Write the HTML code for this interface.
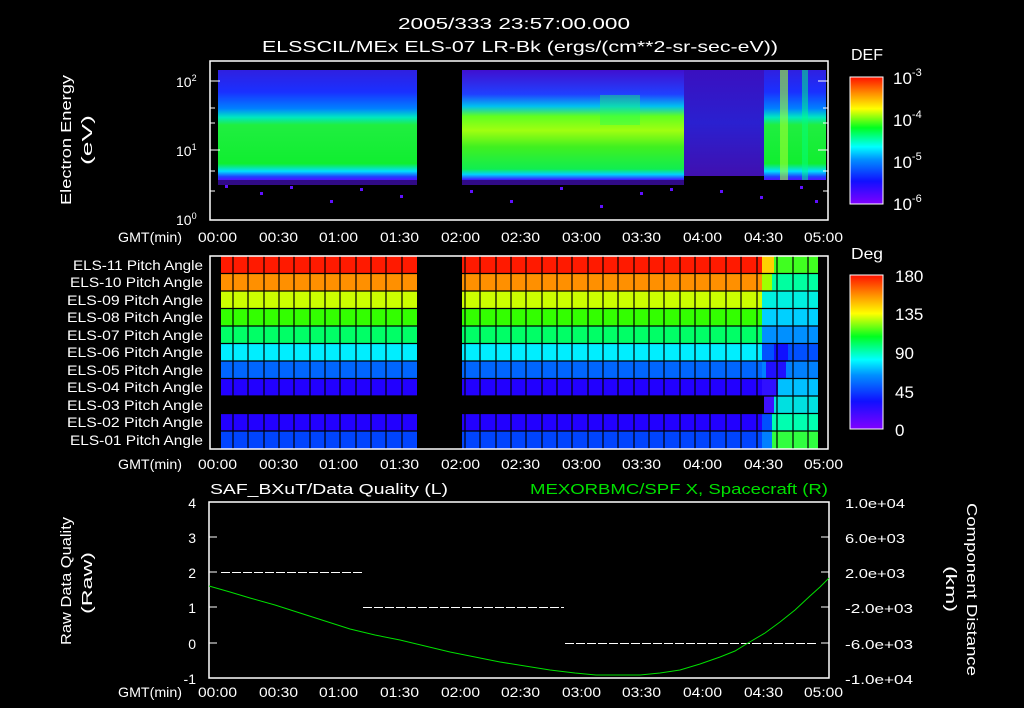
<!DOCTYPE html>
<html><head><meta charset="utf-8"><style>
html,body{margin:0;padding:0;background:#000;width:1024px;height:708px;overflow:hidden}
svg{display:block}
text{font-family:"Liberation Sans",sans-serif;fill:#fff}
</style></head><body>
<svg width="1024" height="708" viewBox="0 0 1024 708" xmlns="http://www.w3.org/2000/svg">
<defs>
<linearGradient id="cb" x1="0" y1="1" x2="0" y2="0">
<stop offset="0" stop-color="#8000ff"/><stop offset="0.18" stop-color="#1010ff"/>
<stop offset="0.35" stop-color="#0090ff"/><stop offset="0.45" stop-color="#00ffff"/>
<stop offset="0.6" stop-color="#00ff20"/><stop offset="0.75" stop-color="#ffff00"/>
<stop offset="0.87" stop-color="#ff9000"/><stop offset="1" stop-color="#ff1000"/>
</linearGradient>
<linearGradient id="specL" x1="0" y1="0" x2="0" y2="1">
<stop offset="0" stop-color="#3020e0"/><stop offset="0.2" stop-color="#1a30ff"/>
<stop offset="0.35" stop-color="#0080ff"/><stop offset="0.43" stop-color="#00e8c0"/>
<stop offset="0.5" stop-color="#20ee40"/><stop offset="0.85" stop-color="#10ee30"/>
<stop offset="0.92" stop-color="#00e0ff"/><stop offset="0.97" stop-color="#2040ff"/>
<stop offset="1" stop-color="#5010ff"/>
</linearGradient>
<linearGradient id="specR" x1="0" y1="0" x2="0" y2="1">
<stop offset="0" stop-color="#4010d0"/><stop offset="0.22" stop-color="#2040ff"/>
<stop offset="0.33" stop-color="#00c0f0"/><stop offset="0.42" stop-color="#60ff20"/>
<stop offset="0.55" stop-color="#a0ff10"/><stop offset="0.7" stop-color="#40f020"/>
<stop offset="0.9" stop-color="#10ee50"/><stop offset="0.95" stop-color="#00d0ff"/>
<stop offset="1" stop-color="#4010ff"/>
</linearGradient>
<linearGradient id="specD" x1="0" y1="0" x2="0" y2="1">
<stop offset="0" stop-color="#3a10c0"/><stop offset="0.5" stop-color="#2a20d0"/>
<stop offset="1" stop-color="#4010b0"/>
</linearGradient>
</defs>

<text x="398" y="29" font-size="16" textLength="232" lengthAdjust="spacingAndGlyphs">2005/333 23:57:00.000</text>
<text x="262" y="52" font-size="16" textLength="516" lengthAdjust="spacingAndGlyphs">ELSSCIL/MEx ELS-07 LR-Bk  (ergs/(cm**2-sr-sec-eV))</text>

<!-- top spectrogram -->
<rect x="218" y="70" width="199" height="110" fill="url(#specL)"/>
<rect x="462" y="70" width="222" height="110" fill="url(#specR)"/>
<rect x="684" y="70" width="80" height="106" fill="url(#specD)"/>
<rect x="764" y="70" width="62" height="110" fill="url(#specL)"/>
<rect x="780" y="70" width="8" height="110" fill="#a0ff30" opacity="0.6"/>
<rect x="802" y="70" width="6" height="110" fill="#00ff80" opacity="0.5"/>
<rect x="600" y="95" width="40" height="30" fill="#20ff60" opacity="0.4"/>
<g fill="#6010ff">
<rect x="225" y="185" width="3" height="3"/><rect x="260" y="192" width="3" height="3"/><rect x="290" y="186" width="3" height="3"/><rect x="330" y="200" width="3" height="3"/><rect x="360" y="188" width="3" height="3"/><rect x="400" y="195" width="3" height="3"/><rect x="470" y="190" width="3" height="3"/><rect x="510" y="200" width="3" height="3"/><rect x="560" y="187" width="3" height="3"/><rect x="600" y="205" width="3" height="3"/><rect x="640" y="192" width="3" height="3"/><rect x="670" y="188" width="3" height="3"/><rect x="720" y="190" width="3" height="3"/><rect x="760" y="196" width="3" height="3"/><rect x="800" y="186" width="3" height="3"/><rect x="815" y="200" width="3" height="3"/>
</g>
<rect x="218" y="180" width="199" height="5" fill="#5010e0" opacity="0.6"/>
<rect x="462" y="180" width="222" height="5" fill="#5010e0" opacity="0.6"/>
<rect x="210" y="61" width="618" height="159" fill="none" stroke="#fff" stroke-width="1.5"/>
<g stroke="#fff">
<line x1="210" y1="81" x2="220" y2="81"/><line x1="210" y1="150" x2="220" y2="150"/>
<line x1="210" y1="108" x2="215" y2="108"/><line x1="210" y1="123" x2="215" y2="123"/><line x1="210" y1="171" x2="215" y2="171"/><line x1="210" y1="191" x2="215" y2="191"/>
<line x1="818" y1="81" x2="828" y2="81"/><line x1="818" y1="150" x2="828" y2="150"/>
<line x1="823" y1="108" x2="828" y2="108"/><line x1="823" y1="123" x2="828" y2="123"/><line x1="823" y1="171" x2="828" y2="171"/><line x1="823" y1="191" x2="828" y2="191"/>
</g>
<text x="176" y="87" font-size="14">10<tspan dy="-6" font-size="9">2</tspan></text>
<text x="176" y="156" font-size="14">10<tspan dy="-6" font-size="9">1</tspan></text>
<text x="176" y="225" font-size="14">10<tspan dy="-6" font-size="9">0</tspan></text>
<text transform="translate(71,205) rotate(-90)" font-size="15" textLength="130" lengthAdjust="spacingAndGlyphs">Electron Energy</text>
<text transform="translate(92,165) rotate(-90)" font-size="15" textLength="50" lengthAdjust="spacingAndGlyphs">(eV)</text>

<g font-size="14">
<text x="118" y="242" textLength="64" lengthAdjust="spacingAndGlyphs">GMT(min)</text>
<text x="198" y="242" textLength="39" lengthAdjust="spacingAndGlyphs">00:00</text><text x="259" y="242" textLength="39" lengthAdjust="spacingAndGlyphs">00:30</text><text x="319" y="242" textLength="39" lengthAdjust="spacingAndGlyphs">01:00</text><text x="380" y="242" textLength="39" lengthAdjust="spacingAndGlyphs">01:30</text><text x="441" y="242" textLength="39" lengthAdjust="spacingAndGlyphs">02:00</text><text x="501" y="242" textLength="39" lengthAdjust="spacingAndGlyphs">02:30</text><text x="562" y="242" textLength="39" lengthAdjust="spacingAndGlyphs">03:00</text><text x="622" y="242" textLength="39" lengthAdjust="spacingAndGlyphs">03:30</text><text x="683" y="242" textLength="39" lengthAdjust="spacingAndGlyphs">04:00</text><text x="744" y="242" textLength="39" lengthAdjust="spacingAndGlyphs">04:30</text><text x="804" y="242" textLength="39" lengthAdjust="spacingAndGlyphs">05:00</text>
</g>

<!-- DEF colorbar -->
<text x="851" y="60" font-size="16" textLength="32" lengthAdjust="spacingAndGlyphs">DEF</text>
<rect x="850" y="77" width="33" height="127" fill="url(#cb)" stroke="#fff"/>
<text x="893" y="84" font-size="17">10<tspan dy="-8" font-size="11">-3</tspan></text>
<text x="893" y="126" font-size="17">10<tspan dy="-8" font-size="11">-4</tspan></text>
<text x="893" y="168" font-size="17">10<tspan dy="-8" font-size="11">-5</tspan></text>
<text x="893" y="210" font-size="17">10<tspan dy="-8" font-size="11">-6</tspan></text>

<!-- pitch panel -->
<g>
<rect x="221" y="256" width="196" height="17.5" fill="#ff1a00"/><rect x="462" y="256" width="300" height="17.5" fill="#ff1a00"/>
<rect x="221" y="273.5" width="196" height="17.5" fill="#ff9000"/><rect x="462" y="273.5" width="300" height="17.5" fill="#ff9000"/>
<rect x="221" y="291" width="196" height="17.5" fill="#ccff00"/><rect x="462" y="291" width="300" height="17.5" fill="#ccff00"/>
<rect x="221" y="308.5" width="196" height="17.5" fill="#33ff00"/><rect x="462" y="308.5" width="300" height="17.5" fill="#33ff00"/>
<rect x="221" y="326" width="196" height="17.5" fill="#00ff66"/><rect x="462" y="326" width="300" height="17.5" fill="#00ff66"/>
<rect x="221" y="343.5" width="196" height="17.5" fill="#00eeff"/><rect x="462" y="343.5" width="300" height="17.5" fill="#00eeff"/>
<rect x="221" y="361" width="196" height="17.5" fill="#0066ff"/><rect x="462" y="361" width="300" height="17.5" fill="#0066ff"/>
<rect x="221" y="378.5" width="196" height="17.5" fill="#2200ff"/><rect x="462" y="378.5" width="300" height="17.5" fill="#2200ff"/>
<rect x="221" y="413.5" width="196" height="17.5" fill="#2200ff"/><rect x="462" y="413.5" width="300" height="17.5" fill="#2200ff"/>
<rect x="221" y="431" width="196" height="17.5" fill="#0044ff"/><rect x="462" y="431" width="300" height="17.5" fill="#0044ff"/>
<rect x="762" y="256" width="56" height="17.5" fill="#40ff20"/><rect x="762" y="256" width="12" height="17.5" fill="#ffd000"/>
<rect x="762" y="273.5" width="56" height="17.5" fill="#00ffa0"/><rect x="762" y="273.5" width="10" height="17.5" fill="#a0ff00"/>
<rect x="762" y="291" width="56" height="17.5" fill="#00f0e0"/>
<rect x="762" y="308.5" width="56" height="17.5" fill="#00d0ff"/>
<rect x="762" y="326" width="56" height="17.5" fill="#0090ff"/>
<rect x="762" y="343.5" width="56" height="17.5" fill="#0050ff"/><rect x="774" y="343.5" width="14" height="17.5" fill="#1010ff"/>
<rect x="762" y="361" width="56" height="17.5" fill="#0080ff"/><rect x="766" y="361" width="20" height="17.5" fill="#2010ff"/>
<rect x="762" y="378.5" width="56" height="17.5" fill="#00c0ff"/><rect x="762" y="378.5" width="16" height="17.5" fill="#3010ff"/>
<rect x="764" y="396" width="54" height="17.5" fill="#00e0e0"/><rect x="764" y="396" width="10" height="17.5" fill="#4010ff"/>
<rect x="762" y="413.5" width="56" height="17.5" fill="#00ffb0"/><rect x="762" y="413.5" width="10" height="17.5" fill="#0050ff"/>
<rect x="762" y="431" width="56" height="17.5" fill="#30ff40"/><rect x="762" y="431" width="10" height="17.5" fill="#0080ff"/>
<g stroke="#000" stroke-width="1.2">
<line x1="221" y1="273.5" x2="818" y2="273.5"/><line x1="221" y1="291" x2="818" y2="291"/><line x1="221" y1="308.5" x2="818" y2="308.5"/><line x1="221" y1="326" x2="818" y2="326"/><line x1="221" y1="343.5" x2="818" y2="343.5"/><line x1="221" y1="361" x2="818" y2="361"/><line x1="221" y1="378.5" x2="818" y2="378.5"/><line x1="221" y1="396" x2="818" y2="396"/><line x1="221" y1="413.5" x2="818" y2="413.5"/><line x1="221" y1="431" x2="818" y2="431"/>
</g>
<g stroke="#000" stroke-width="1.2">
<line x1="233" y1="256" x2="233" y2="449"/><line x1="248" y1="256" x2="248" y2="449"/><line x1="264" y1="256" x2="264" y2="449"/><line x1="279" y1="256" x2="279" y2="449"/><line x1="294" y1="256" x2="294" y2="449"/><line x1="310" y1="256" x2="310" y2="449"/><line x1="325" y1="256" x2="325" y2="449"/><line x1="340" y1="256" x2="340" y2="449"/><line x1="356" y1="256" x2="356" y2="449"/><line x1="371" y1="256" x2="371" y2="449"/><line x1="386" y1="256" x2="386" y2="449"/><line x1="402" y1="256" x2="402" y2="449"/>
<line x1="465" y1="256" x2="465" y2="449"/><line x1="480" y1="256" x2="480" y2="449"/><line x1="496" y1="256" x2="496" y2="449"/><line x1="511" y1="256" x2="511" y2="449"/><line x1="526" y1="256" x2="526" y2="449"/><line x1="542" y1="256" x2="542" y2="449"/><line x1="557" y1="256" x2="557" y2="449"/><line x1="572" y1="256" x2="572" y2="449"/><line x1="588" y1="256" x2="588" y2="449"/><line x1="603" y1="256" x2="603" y2="449"/><line x1="618" y1="256" x2="618" y2="449"/><line x1="634" y1="256" x2="634" y2="449"/><line x1="649" y1="256" x2="649" y2="449"/><line x1="664" y1="256" x2="664" y2="449"/><line x1="680" y1="256" x2="680" y2="449"/><line x1="695" y1="256" x2="695" y2="449"/><line x1="710" y1="256" x2="710" y2="449"/><line x1="726" y1="256" x2="726" y2="449"/><line x1="741" y1="256" x2="741" y2="449"/><line x1="757" y1="256" x2="757" y2="449"/><line x1="777" y1="256" x2="777" y2="449"/><line x1="793" y1="256" x2="793" y2="449"/><line x1="808" y1="256" x2="808" y2="449"/>
</g>
<rect x="210" y="256" width="618" height="193" fill="none" stroke="#fff" stroke-width="1.5"/>
</g>
<g font-size="14">
<text x="73" y="270" textLength="130" lengthAdjust="spacingAndGlyphs">ELS-11 Pitch Angle</text><text x="70" y="287" textLength="133" lengthAdjust="spacingAndGlyphs">ELS-10 Pitch Angle</text><text x="67" y="305" textLength="136" lengthAdjust="spacingAndGlyphs">ELS-09 Pitch Angle</text><text x="67" y="322" textLength="136" lengthAdjust="spacingAndGlyphs">ELS-08 Pitch Angle</text><text x="67" y="340" textLength="136" lengthAdjust="spacingAndGlyphs">ELS-07 Pitch Angle</text><text x="67" y="357" textLength="136" lengthAdjust="spacingAndGlyphs">ELS-06 Pitch Angle</text><text x="67" y="375" textLength="136" lengthAdjust="spacingAndGlyphs">ELS-05 Pitch Angle</text><text x="67" y="392" textLength="136" lengthAdjust="spacingAndGlyphs">ELS-04 Pitch Angle</text><text x="67" y="410" textLength="136" lengthAdjust="spacingAndGlyphs">ELS-03 Pitch Angle</text><text x="67" y="427" textLength="136" lengthAdjust="spacingAndGlyphs">ELS-02 Pitch Angle</text><text x="70" y="445" textLength="133" lengthAdjust="spacingAndGlyphs">ELS-01 Pitch Angle</text>
</g>
<g font-size="14">
<text x="118" y="469" textLength="64" lengthAdjust="spacingAndGlyphs">GMT(min)</text>
<text x="198" y="469" textLength="39" lengthAdjust="spacingAndGlyphs">00:00</text><text x="259" y="469" textLength="39" lengthAdjust="spacingAndGlyphs">00:30</text><text x="319" y="469" textLength="39" lengthAdjust="spacingAndGlyphs">01:00</text><text x="380" y="469" textLength="39" lengthAdjust="spacingAndGlyphs">01:30</text><text x="441" y="469" textLength="39" lengthAdjust="spacingAndGlyphs">02:00</text><text x="501" y="469" textLength="39" lengthAdjust="spacingAndGlyphs">02:30</text><text x="562" y="469" textLength="39" lengthAdjust="spacingAndGlyphs">03:00</text><text x="622" y="469" textLength="39" lengthAdjust="spacingAndGlyphs">03:30</text><text x="683" y="469" textLength="39" lengthAdjust="spacingAndGlyphs">04:00</text><text x="744" y="469" textLength="39" lengthAdjust="spacingAndGlyphs">04:30</text><text x="804" y="469" textLength="39" lengthAdjust="spacingAndGlyphs">05:00</text>
</g>

<!-- Deg colorbar -->
<text x="851" y="259" font-size="16" textLength="32" lengthAdjust="spacingAndGlyphs">Deg</text>
<rect x="850" y="275" width="33" height="154" fill="url(#cb)" stroke="#fff"/>
<g font-size="17"><text x="895" y="282">180</text><text x="895" y="320">135</text><text x="895" y="359">90</text><text x="895" y="398">45</text><text x="895" y="436">0</text></g>

<!-- bottom panel -->
<text x="210" y="494" font-size="15" textLength="238" lengthAdjust="spacingAndGlyphs">SAF_BXuT/Data Quality (L)</text>
<text x="530" y="494" font-size="15" style="fill:#00e000" textLength="298" lengthAdjust="spacingAndGlyphs">MEXORBMC/SPF X, Spacecraft (R)</text>
<rect x="209" y="502" width="620" height="176" fill="none" stroke="#fff" stroke-width="1.5"/>
<g stroke="#fff">
<line x1="209" y1="537" x2="217" y2="537"/><line x1="209" y1="572" x2="217" y2="572"/><line x1="209" y1="607" x2="217" y2="607"/><line x1="209" y1="643" x2="217" y2="643"/>
<line x1="821" y1="537" x2="829" y2="537"/><line x1="821" y1="572" x2="829" y2="572"/><line x1="821" y1="607" x2="829" y2="607"/><line x1="821" y1="643" x2="829" y2="643"/>
</g>
<g stroke="#fff" stroke-width="1" stroke-dasharray="9,2" shape-rendering="crispEdges">
<line x1="221" y1="572.5" x2="362" y2="572.5"/><line x1="363" y1="607.5" x2="564" y2="607.5"/><line x1="565" y1="643.5" x2="816" y2="643.5"/>
</g>
<polyline fill="none" stroke="#00e000" stroke-width="1" points="209,586 230,592 250,598 275,605 300,613 325,621 350,629 375,635 400,640 425,646 450,652 475,657 500,662 525,666 550,670 575,673 596,675 620,675 640,675 660,673 680,670 700,664 720,657 735,651 748,643 765,633 780,622 795,610 810,596 820,587 829,578"/>
<g font-size="14" text-anchor="end"><text x="196" y="508">4</text><text x="196" y="543">3</text><text x="196" y="578">2</text><text x="196" y="613">1</text><text x="196" y="649">0</text><text x="196" y="684">-1</text></g>
<g font-size="13"><text x="845" y="508" textLength="60" lengthAdjust="spacingAndGlyphs">1.0e+04</text><text x="845" y="543" textLength="60" lengthAdjust="spacingAndGlyphs">6.0e+03</text><text x="845" y="578" textLength="60" lengthAdjust="spacingAndGlyphs">2.0e+03</text><text x="845" y="613" textLength="68" lengthAdjust="spacingAndGlyphs">-2.0e+03</text><text x="845" y="649" textLength="68" lengthAdjust="spacingAndGlyphs">-6.0e+03</text><text x="845" y="684" textLength="68" lengthAdjust="spacingAndGlyphs">-1.0e+04</text></g>
<text transform="translate(71,645) rotate(-90)" font-size="15" textLength="128" lengthAdjust="spacingAndGlyphs">Raw Data Quality</text>
<text transform="translate(92,614) rotate(-90)" font-size="15" textLength="62" lengthAdjust="spacingAndGlyphs">(Raw)</text>
<text transform="translate(967,503) rotate(90)" font-size="15" textLength="173" lengthAdjust="spacingAndGlyphs">Component Distance</text>
<text transform="translate(946,566) rotate(90)" font-size="15" textLength="46" lengthAdjust="spacingAndGlyphs">(km)</text>
<g font-size="14">
<text x="118" y="697" textLength="64" lengthAdjust="spacingAndGlyphs">GMT(min)</text>
<text x="198" y="697" textLength="39" lengthAdjust="spacingAndGlyphs">00:00</text><text x="259" y="697" textLength="39" lengthAdjust="spacingAndGlyphs">00:30</text><text x="319" y="697" textLength="39" lengthAdjust="spacingAndGlyphs">01:00</text><text x="380" y="697" textLength="39" lengthAdjust="spacingAndGlyphs">01:30</text><text x="441" y="697" textLength="39" lengthAdjust="spacingAndGlyphs">02:00</text><text x="501" y="697" textLength="39" lengthAdjust="spacingAndGlyphs">02:30</text><text x="562" y="697" textLength="39" lengthAdjust="spacingAndGlyphs">03:00</text><text x="622" y="697" textLength="39" lengthAdjust="spacingAndGlyphs">03:30</text><text x="683" y="697" textLength="39" lengthAdjust="spacingAndGlyphs">04:00</text><text x="744" y="697" textLength="39" lengthAdjust="spacingAndGlyphs">04:30</text><text x="804" y="697" textLength="39" lengthAdjust="spacingAndGlyphs">05:00</text>
</g>
</svg>
</body></html>
